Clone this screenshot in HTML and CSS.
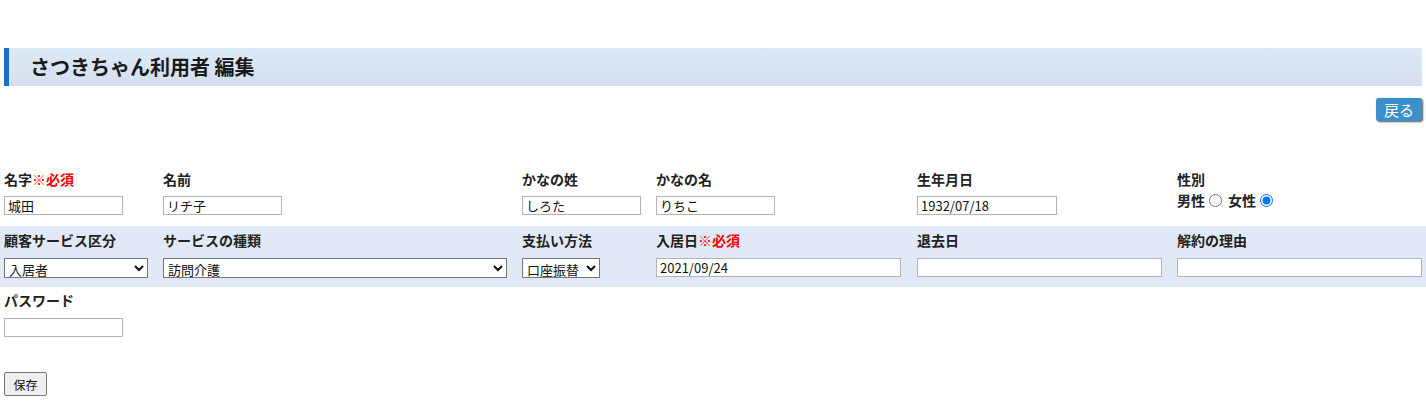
FILE: index.html
```html
<!DOCTYPE html>
<html lang="ja">
<head>
<meta charset="utf-8">
<title>さつきちゃん利用者 編集</title>
<link rel="stylesheet" href="styles.css">
</head>
<body>
<h1 class="page-title">さつきちゃん利用者 編集</h1>
<div class="toolbar"><button class="btn-back" type="button">戻る</button></div>
<form class="user-form">
  <div class="row">
    <div class="cell">
      <div class="lbl">名字<span class="req">※必須</span></div>
      <input class="txt w119" type="text" value="城田">
    </div>
    <div class="cell">
      <div class="lbl">名前</div>
      <input class="txt w119" type="text" value="リチ子">
    </div>
    <div class="cell">
      <div class="lbl">かなの姓</div>
      <input class="txt w119" type="text" value="しろた">
    </div>
    <div class="cell">
      <div class="lbl">かなの名</div>
      <input class="txt w119" type="text" value="りちこ">
    </div>
    <div class="cell">
      <div class="lbl">生年月日</div>
      <input class="txt w140" type="text" value="1932/07/18">
    </div>
    <div class="cell">
      <div class="lbl">性別</div>
      <div class="radios">
        <label class="rad">男性<input type="radio" name="sex"></label>
        <label class="rad">女性<input type="radio" name="sex" checked></label>
      </div>
    </div>
  </div>
  <div class="row row-alt">
    <div class="cell">
      <div class="lbl">顧客サービス区分</div>
      <select class="sel w144"><option>入居者</option></select>
    </div>
    <div class="cell">
      <div class="lbl">サービスの種類</div>
      <select class="sel w344"><option>訪問介護</option></select>
    </div>
    <div class="cell">
      <div class="lbl">支払い方法</div>
      <select class="sel w78"><option>口座振替</option></select>
    </div>
    <div class="cell">
      <div class="lbl">入居日<span class="req">※必須</span></div>
      <input class="txt w245" type="text" value="2021/09/24">
    </div>
    <div class="cell">
      <div class="lbl">退去日</div>
      <input class="txt w245" type="text" value="">
    </div>
    <div class="cell">
      <div class="lbl">解約の理由</div>
      <input class="txt w245" type="text" value="">
    </div>
  </div>
  <div class="row row-last">
    <div class="cell">
      <div class="lbl">パスワード</div>
      <input class="txt w119" type="password" value="">
    </div>
  </div>
  <div class="actions"><button class="btn-save" type="submit">保存</button></div>
</form>
</body>
</html>
```
FILE: styles.css
```css
html, body {
  margin: 0;
  padding: 0;
  background: #fff;
}
body {
  font-family: "Noto Sans CJK JP", "Noto Sans", sans-serif;
  color: #222;
  font-size: 13px;
}
.page-title {
  margin: 48px 4px 0;
  height: 38px;
  box-sizing: border-box;
  border-left: 5px solid #1a6ed2;
  background: linear-gradient(#dceaf9, #d6def0);
  font-size: 20px;
  font-weight: bold;
  line-height: 38px;
  padding-left: 21px;
  color: #1a1a1a;
}
.toolbar {
  display: flex;
  justify-content: flex-end;
  padding: 12px 4px 0;
}
.btn-back {
  width: 46px;
  height: 23px;
  padding: 0;
  border: none;
  border-radius: 3px;
  background: #3a8fcc;
  color: #fff;
  font-family: inherit;
  font-size: 15px;
  line-height: 23px;
  box-shadow: 1px 1px 2px #555;
}
.user-form {
  margin-top: 44px;
}
.row {
  display: grid;
  grid-template-columns: 159px 359px 134px 261px 260px 1fr;
  padding: 6px 0 11px;
}
.row-alt {
  background: #e2e9f6;
  padding-bottom: 9px;
}
.row-last {
  padding-top: 5px;
  padding-bottom: 0;
}
.cell {
  padding: 0 4px;
  min-width: 0;
}
.lbl {
  height: 16px;
  line-height: 16px;
  font-weight: bold;
  font-size: 14px;
  margin-bottom: 9px;
  white-space: nowrap;
}
.row-alt .lbl,
.row-last .lbl {
  margin-bottom: 10px;
}
.req {
  color: #f00;
}
.txt {
  display: block;
  box-sizing: border-box;
  height: 19px;
  margin: 0;
  padding: 0 3px;
  border: 1px solid #b4b4b4;
  background: #fff;
  font-family: inherit;
  font-size: 13px;
  color: #111;
}
.w119 { width: 119px; }
.w140 { width: 140px; }
.w245 { width: 245px; }
.sel {
  display: block;
  box-sizing: border-box;
  height: 20px;
  margin: 0;
  font-family: inherit;
  font-size: 13px;
  color: #111;
  border: 1px solid #767676;
  border-radius: 0;
  background: #fff;
}
.w144 { width: 144px; }
.w344 { width: 344px; }
.w78 { width: 78px; }
.radios {
  display: flex;
  align-items: center;
  margin-top: -5px;
  height: 18px;
  font-weight: bold;
  font-size: 14px;
}
.rad {
  display: inline-flex;
  align-items: center;
}
.rad input {
  margin: 1px 6px 0 4px;
  width: 13px;
  height: 13px;
}
.actions {
  padding: 35px 4px 0;
}
.btn-save {
  height: 24px;
  width: 43px;
  padding: 0;
  font-family: inherit;
  font-size: 12px;
  background: #efefef;
  border: 1px solid #767676;
  border-radius: 2px;
  color: #111;
}
```
